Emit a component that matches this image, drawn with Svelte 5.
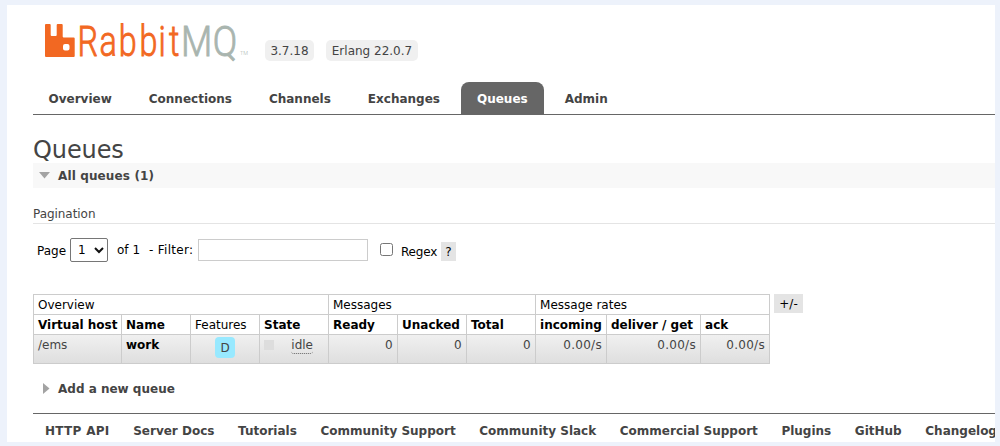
<script lang="ts">
  interface Column {
    label: string;
    width: number;
    sortable: boolean;
  }

  interface Queue {
    vhost: string;
    name: string;
    feature: string;
    state: string;
    messages: number[];
    rates: string[];
  }

  const tabs = ['Overview', 'Connections', 'Channels', 'Exchanges', 'Queues', 'Admin'];

  const footerLinks = [
    'HTTP API',
    'Server Docs',
    'Tutorials',
    'Community Support',
    'Community Slack',
    'Commercial Support',
    'Plugins',
    'GitHub',
    'Changelog'
  ];

  const columns: Column[] = [
    { label: 'Virtual host', width: 88, sortable: true },
    { label: 'Name', width: 69, sortable: true },
    { label: 'Features', width: 69, sortable: false },
    { label: 'State', width: 69, sortable: true },
    { label: 'Ready', width: 69, sortable: true },
    { label: 'Unacked', width: 69, sortable: true },
    { label: 'Total', width: 69, sortable: true },
    { label: 'incoming', width: 71, sortable: true },
    { label: 'deliver / get', width: 94, sortable: true },
    { label: 'ack', width: 69, sortable: true }
  ];

  const queues: Queue[] = [
    {
      vhost: '/ems',
      name: 'work',
      feature: 'D',
      state: 'idle',
      messages: [0, 0, 0],
      rates: ['0.00/s', '0.00/s', '0.00/s']
    }
  ];

  let activeTab = $state('Queues');
  let filter = $state('');
  let regex = $state(false);
</script>

<div class="page">
  <header>
    <svg class="logo" width="206" height="54" viewBox="0 -10 206 54">
      <path
        fill="#f26822"
        d="M1 2h3.700q1 0 1 1v10q0 1 1 1h4q1 0 1-1V3q0-1 1-1h4q1 0 1 1v11.500q0 1 1 1h10q1 0 1 1V34q0 1-1 1H1q-1 0-1-1V3q0-1 1-1zM20 22q-2 0-2 2v2.500q0 2 2 2h2.500q2 0 2-2V24q0-2-2-2z"
      />
      <g transform="scale(0.76 1)">
        <text class="rabbit" x="42.800 71.700 97 124.500 149.500 163.300" y="33.500">Rabbit</text>
      </g>
      <g transform="scale(0.85 1)">
        <text class="mq" x="160 197.500" y="33.500">MQ</text>
      </g>
      <text class="tm" x="195" y="33" textLength="8" lengthAdjust="spacingAndGlyphs">TM</text>
    </svg>
    <span class="version">3.7.18</span>
    <span class="version erlang">Erlang 22.0.7</span>
  </header>

  <nav>
    {#each tabs as tab (tab)}
      <button class="tab" class:active={tab === activeTab} onclick={() => (activeTab = tab)}>{tab}</button>
    {/each}
  </nav>

  <main>
    <h1>Queues</h1>
    <h2 class="section open">
      <svg width="11" height="7" viewBox="0 0 11 7"><path d="M0 0h11L5.500 6.500z" fill="#a3a3a3" /></svg>
      <span>All queues (1)</span>
    </h2>

    <h3>Pagination</h3>
    <div class="filters">
      <span class="page-label">Page</span>
      <div class="select">
        <span>1</span>
        <svg width="10" height="7" viewBox="0 0 10 7"><path d="M1 1l4 4 4-4" fill="none" stroke="#111" stroke-width="2" /></svg>
      </div>
      <span class="of">of 1</span>
      <span class="filter-label">- Filter:</span>
      <input class="filter" type="text" bind:value={filter} />
      <input class="regex" type="checkbox" bind:checked={regex} />
      <span class="regex-label">Regex</span>
      <span class="help">?</span>
    </div>

    <div class="table-row">
      <table>
        <colgroup>
          {#each columns as column}
            <col style="width: {column.width}px" />
          {/each}
        </colgroup>
        <thead>
          <tr>
            <th colspan="4">Overview</th>
            <th colspan="3">Messages</th>
            <th colspan="3">Message rates</th>
          </tr>
          <tr>
            {#each columns as column}
              <th class:sortable={column.sortable}>{column.label}</th>
            {/each}
          </tr>
        </thead>
        <tbody>
          {#each queues as queue (queue.name)}
            <tr>
              <td>{queue.vhost}</td>
              <td class="name">{queue.name}</td>
              <td class="center"><span class="feature">{queue.feature}</span></td>
              <td>
                <div class="state"><i></i><span>{queue.state}</span></div>
              </td>
              {#each queue.messages as count}
                <td class="number">{count}</td>
              {/each}
              {#each queue.rates as rate}
                <td class="number">{rate}</td>
              {/each}
            </tr>
          {/each}
        </tbody>
      </table>
      <span class="toggle-columns">+/-</span>
    </div>

    <h2 class="section add">
      <svg width="7" height="12" viewBox="0 0 7 12"><path d="M0 0l6.500 5.500L0 11z" fill="#a3a3a3" /></svg>
      <span>Add a new queue</span>
    </h2>
  </main>

  <footer>
    {#each footerLinks as link}
      <span>{link}</span>
    {/each}
  </footer>
</div>

<style>
  :global(body) {
    background: #edf2fb;
  }

  .page {
    box-sizing: border-box;
    width: 988px;
    height: 437px;
    margin: 5px 0 0 7px;
    padding-left: 26px;
    background: #fff;
    color: #444;
    font: 12px/15px Verdana, 'DejaVu Sans', sans-serif;
    overflow: hidden;
    white-space: nowrap;
  }

  header {
    display: flex;
    align-items: flex-start;
    height: 77px;
    padding: 7px 0 0 12px;
    box-sizing: border-box;
  }

  .logo {
    display: block;
  }

  .logo text {
    font-family: Roboto, sans-serif;
    font-weight: 300;
    font-size: 42.5px;
    stroke-width: 0.9px;
  }

  .rabbit {
    fill: #f26822;
    stroke: #f26822;
  }

  .mq {
    fill: #a9b5af;
    stroke: #a9b5af;
  }

  .logo .tm {
    fill: #a9b5af;
    font-size: 6px;
  }

  .version {
    box-sizing: border-box;
    width: 49px;
    height: 21px;
    margin: 28px 0 0 14px;
    border-radius: 5px;
    background: #f0f0f0;
    line-height: 22px;
    text-align: center;
  }

  .erlang {
    width: 92px;
    margin-left: 12px;
  }

  nav {
    display: flex;
    gap: 5px;
    height: 32px;
    border-bottom: 1px solid #666;
  }

  .tab {
    padding: 2px 16px 0;
    border: 0;
    border-radius: 8px 8px 0 0;
    background: none;
    color: #444;
    font: bold 12px/30px Verdana, 'DejaVu Sans', sans-serif;
  }

  .tab:first-child {
    padding-left: 15.5px;
  }

  .active {
    background: #666;
    color: #fff;
  }

  h1 {
    margin: 20px 0 0;
    height: 28px;
    font-size: 24px;
    font-weight: normal;
    line-height: 31px;
    letter-spacing: -0.1px;
  }

  .section {
    display: flex;
    align-items: center;
    margin: 0;
    font-size: 12px;
    line-height: 23px;
  }

  .section span {
    padding-top: 2px;
  }

  .open {
    height: 25px;
    padding-left: 6px;
    gap: 8px;
    background: #f8f8f8;
    letter-spacing: 0.13px;
  }

  h3 {
    height: 17px;
    margin: 18px 0 0;
    border-bottom: 1px solid #e4e4e4;
    font-size: 12px;
    font-weight: normal;
    line-height: 17px;
    letter-spacing: -0.05px;
  }

  .filters {
    display: flex;
    align-items: flex-start;
    height: 70px;
    padding: 14px 0 0 4px;
    box-sizing: border-box;
    color: #000;
    line-height: 24px;
  }

  .page-label {
    width: 33px;
    padding-top: 1px;
  }

  .select {
    display: flex;
    align-items: center;
    gap: 8px;
    box-sizing: border-box;
    width: 38px;
    height: 24px;
    padding-left: 7px;
    border: 1px solid #767676;
    border-radius: 2px;
  }

  .of {
    width: 32px;
    margin-left: 9px;
  }

  .filter-label {
    width: 49px;
    letter-spacing: 0.3px;
  }

  .filter {
    box-sizing: border-box;
    width: 170px;
    height: 22px;
    margin: 1px 0 0;
    padding: 2px;
    border: 1px solid #ccc;
  }

  .regex {
    width: 13px;
    height: 13px;
    margin: 5px 0 0 12px;
  }

  .regex-label {
    width: 40px;
    margin: 2px 0 0 8px;
    letter-spacing: -0.2px;
  }

  .help {
    width: 15px;
    height: 19px;
    margin-top: 4px;
    background: #e4e4e4;
    line-height: 20px;
    text-align: center;
  }

  .table-row {
    display: flex;
    align-items: flex-start;
    gap: 4px;
  }

  table {
    width: 737px;
    border-collapse: collapse;
    table-layout: fixed;
  }

  th,
  td {
    box-sizing: border-box;
    height: 20px;
    padding: 3px 4px 1px;
    border: 1px solid #ccc;
    line-height: 15px;
    text-align: left;
  }

  th {
    color: #000;
    font-weight: normal;
  }

  .sortable,
  .name {
    color: #000;
    font-weight: bold;
  }

  tbody tr {
    background: linear-gradient(#f0f0f0, #dedede);
  }

  td {
    height: 29px;
    vertical-align: top;
  }

  .center {
    padding-top: 2px;
    text-align: center;
  }

  .feature {
    display: block;
    width: 20px;
    height: 21px;
    margin: 0 auto;
    border-radius: 4px;
    background: #98e9ff;
    line-height: 22px;
  }

  .state {
    display: flex;
    justify-content: space-between;
    padding-right: 11px;
  }

  .state i {
    width: 10px;
    height: 10px;
    margin-top: 2px;
    background: #ddd;
  }

  .state span {
    height: 15px;
    border-bottom: 1px dotted #666;
    border-radius: 3px;
  }

  .number {
    text-align: right;
    letter-spacing: 0.3px;
  }

  .toggle-columns {
    width: 29px;
    height: 19px;
    background: #e4e4e4;
    color: #000;
    line-height: 20px;
    text-align: center;
  }

  .add {
    gap: 8px;
    height: 25px;
    margin-top: 12px;
    padding-left: 10px;
  }

  footer {
    display: flex;
    gap: 23.6px;
    margin-top: 12px;
    padding: 10px 0 0 12px;
    border-top: 1px solid #666;
    font-weight: bold;
  }

  footer span:first-child {
    letter-spacing: 0.3px;
  }
</style>
